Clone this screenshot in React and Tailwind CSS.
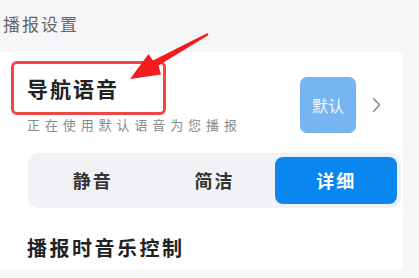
export default function App() {
  const segs = ['静音', '简洁', '详细'];
  const active = 2;
  return (
    <div className="relative w-[419px] h-[278px] overflow-hidden bg-[#f6f6f9] font-['Noto_Sans_CJK_SC',sans-serif]">
      <div className="h-[52px] pl-[3px] pt-[14px] text-[17px] leading-[20px] tracking-[2px] text-[#666]">播报设置</div>

      <div className="w-[403px] h-[218px] bg-white">
        <div className="flex items-start pt-[25px] pl-[27px] pr-[22px]">
          <div className="flex flex-col">
            <div className="mt-[-1px] text-[21px] leading-[24px] font-bold tracking-[2px] text-[#222]">导航语音</div>
            <div className="mt-[17px] text-[13px] leading-[16px] tracking-[4.9px] text-[#8a8a8a]">正在使用默认语音为您播报</div>
          </div>
          <div className="ml-auto flex items-center">
            <div className="w-[56px] h-[56px] rounded-[7px] bg-[#75b5f1] flex items-center justify-center text-[16px] text-white/90">默认</div>
            <svg width="9" height="16" viewBox="0 0 9 16" className="ml-[16px]">
              <path d="M1.5 1.5 L7.5 8 L1.5 14.5" fill="none" stroke="#8c8c8c" strokeWidth="1.6" strokeLinecap="round" strokeLinejoin="round" />
            </svg>
          </div>
        </div>

        <div className="ml-[28px] mt-[20px] w-[373px] h-[55px] rounded-[10px] bg-[#f1f2f6] p-[4px] flex">
          {segs.map((s, i) => (
            <div
              key={s}
              className={
                i === active
                  ? 'flex-1 rounded-[8px] bg-[#0a86ef] flex items-center justify-center text-[18px] font-bold tracking-[2px] text-white'
                  : 'flex-1 flex items-center justify-center text-[18px] font-bold tracking-[2px] text-[#333]'
              }
            >
              {s}
            </div>
          ))}
        </div>

        <div className="ml-[27px] mt-[28px] text-[20px] leading-[24px] font-bold tracking-[2.5px] text-[#222]">播报时音乐控制</div>
      </div>

      <div className="absolute left-[11px] top-[61px] w-[155px] h-[54px] rounded-[6px] border-[3px] border-[#ef4646]" />
      <svg className="absolute left-0 top-0" width="419" height="278" viewBox="0 0 419 278">
        <polygon
          points="208.5,34.9 158.5,65.5 161,74.5 130,79 148.5,54 153,60.5 207.5,33.1"
          fill="#f21c1c"
          strokeLinejoin="round"
        />
      </svg>
    </div>
  );
}
